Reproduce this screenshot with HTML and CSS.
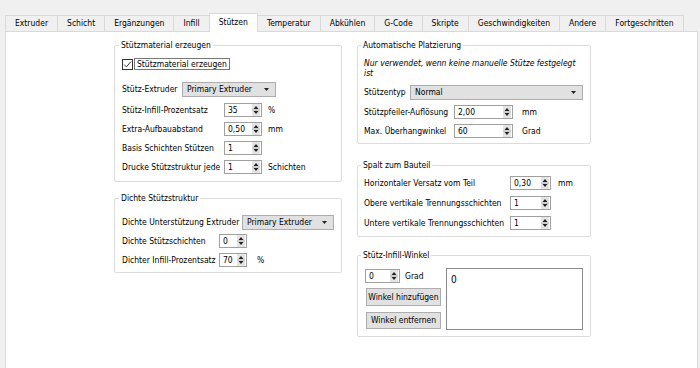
FILE: index.html
```html
<!DOCTYPE html>
<html lang="de">
<head>
<meta charset="utf-8">
<title>Stützen</title>
<link rel="stylesheet" href="styles.css">
</head>
<body>
<div class="window">
  <div class="tabs">
    <div class="tab">Extruder</div>
    <div class="tab">Schicht</div>
    <div class="tab">Ergänzungen</div>
    <div class="tab">Infill</div>
    <div class="tab active">Stützen</div>
    <div class="tab">Temperatur</div>
    <div class="tab">Abkühlen</div>
    <div class="tab">G-Code</div>
    <div class="tab">Skripte</div>
    <div class="tab">Geschwindigkeiten</div>
    <div class="tab">Andere</div>
    <div class="tab">Fortgeschritten</div>
  </div>
  <div class="pane">
    <div class="col col-left">
      <fieldset class="group g1">
        <legend>Stützmaterial erzeugen</legend>
        <div class="check-row">
          <span class="checkbox"><svg width="9" height="9" viewBox="0 0 9 9"><path d="M1.2 4.6 L3.4 6.9 L7.9 1.6" fill="none" stroke="#333" stroke-width="1"/></svg></span>
          <span class="focus">Stützmaterial erzeugen</span>
        </div>
        <div class="combo-row">
          <span class="clabel w60">Stütz-Extruder</span>
          <div class="combo w94"><span>Primary Extruder</span><svg class="drop" width="5" height="3" viewBox="0 0 5 3"><path d="M0 0 H5 L2.5 3 Z" fill="#222"/></svg></div>
        </div>
        <div class="form f1">
          <div class="frow"><span>Stütz-Infill-Prozentsatz</span><div class="spin"><span class="val">35</span><svg class="arr" width="8" height="12" viewBox="0 0 8 12"><rect width="8" height="12" fill="#e4e4e4"/><path d="M1.5 5 L4 2 L6.5 5 Z M1.5 7 L4 10 L6.5 7 Z" fill="#222"/><rect y="5.6" width="8" height="0.8" fill="#aaa"/></svg></div><span class="unit">%</span></div>
          <div class="frow"><span>Extra-Aufbauabstand</span><div class="spin"><span class="val">0,50</span><svg class="arr" width="8" height="12" viewBox="0 0 8 12"><rect width="8" height="12" fill="#e4e4e4"/><path d="M1.5 5 L4 2 L6.5 5 Z M1.5 7 L4 10 L6.5 7 Z" fill="#222"/><rect y="5.6" width="8" height="0.8" fill="#aaa"/></svg></div><span class="unit">mm</span></div>
          <div class="frow"><span>Basis Schichten Stützen</span><div class="spin"><span class="val">1</span><svg class="arr" width="8" height="12" viewBox="0 0 8 12"><rect width="8" height="12" fill="#e4e4e4"/><path d="M1.5 5 L4 2 L6.5 5 Z M1.5 7 L4 10 L6.5 7 Z" fill="#222"/><rect y="5.6" width="8" height="0.8" fill="#aaa"/></svg></div><span class="unit"></span></div>
          <div class="frow"><span>Drucke Stützstruktur jede</span><div class="spin"><span class="val">1</span><svg class="arr" width="8" height="12" viewBox="0 0 8 12"><rect width="8" height="12" fill="#e4e4e4"/><path d="M1.5 5 L4 2 L6.5 5 Z M1.5 7 L4 10 L6.5 7 Z" fill="#222"/><rect y="5.6" width="8" height="0.8" fill="#aaa"/></svg></div><span class="unit">Schichten</span></div>
        </div>
      </fieldset>

      <fieldset class="group g2">
        <legend>Dichte Stützstruktur</legend>
        <div class="combo-row">
          <span class="clabel w120">Dichte Unterstützung Extruder</span>
          <div class="combo w93"><span>Primary Extruder</span><svg class="drop" width="5" height="3" viewBox="0 0 5 3"><path d="M0 0 H5 L2.5 3 Z" fill="#222"/></svg></div>
        </div>
        <div class="form f2">
          <div class="frow"><span>Dichte Stützschichten</span><div class="spin"><span class="val">0</span><svg class="arr" width="8" height="12" viewBox="0 0 8 12"><rect width="8" height="12" fill="#e4e4e4"/><path d="M1.5 5 L4 2 L6.5 5 Z M1.5 7 L4 10 L6.5 7 Z" fill="#222"/><rect y="5.6" width="8" height="0.8" fill="#aaa"/></svg></div><span class="unit"></span></div>
          <div class="frow"><span>Dichter Infill-Prozentsatz</span><div class="spin"><span class="val">70</span><svg class="arr" width="8" height="12" viewBox="0 0 8 12"><rect width="8" height="12" fill="#e4e4e4"/><path d="M1.5 5 L4 2 L6.5 5 Z M1.5 7 L4 10 L6.5 7 Z" fill="#222"/><rect y="5.6" width="8" height="0.8" fill="#aaa"/></svg></div><span class="unit">%</span></div>
        </div>
      </fieldset>
    </div>

    <div class="col col-right">
      <fieldset class="group ga">
        <legend>Automatische Platzierung</legend>
        <p class="note">Nur verwendet, wenn keine manuelle Stütze festgelegt<br>ist</p>
        <div class="combo-row">
          <span class="clabel w46">Stützentyp</span>
          <div class="combo w173"><span>Normal</span><svg class="drop" width="5" height="3" viewBox="0 0 5 3"><path d="M0 0 H5 L2.5 3 Z" fill="#222"/></svg></div>
        </div>
        <div class="form fa">
          <div class="frow"><span>Stützpfeiler-Auflösung</span><div class="spin"><span class="val">2,00</span><svg class="arr" width="8" height="12" viewBox="0 0 8 12"><rect width="8" height="12" fill="#e4e4e4"/><path d="M1.5 5 L4 2 L6.5 5 Z M1.5 7 L4 10 L6.5 7 Z" fill="#222"/><rect y="5.6" width="8" height="0.8" fill="#aaa"/></svg></div><span class="unit">mm</span></div>
          <div class="frow"><span>Max. Überhangwinkel</span><div class="spin"><span class="val">60</span><svg class="arr" width="8" height="12" viewBox="0 0 8 12"><rect width="8" height="12" fill="#e4e4e4"/><path d="M1.5 5 L4 2 L6.5 5 Z M1.5 7 L4 10 L6.5 7 Z" fill="#222"/><rect y="5.6" width="8" height="0.8" fill="#aaa"/></svg></div><span class="unit">Grad</span></div>
        </div>
      </fieldset>

      <fieldset class="group gb">
        <legend>Spalt zum Bauteil</legend>
        <div class="form fb">
          <div class="frow"><span>Horizontaler Versatz vom Teil</span><div class="spin"><span class="val">0,30</span><svg class="arr" width="8" height="12" viewBox="0 0 8 12"><rect width="8" height="12" fill="#e4e4e4"/><path d="M1.5 5 L4 2 L6.5 5 Z M1.5 7 L4 10 L6.5 7 Z" fill="#222"/><rect y="5.6" width="8" height="0.8" fill="#aaa"/></svg></div><span class="unit">mm</span></div>
          <div class="frow"><span>Obere vertikale Trennungsschichten</span><div class="spin"><span class="val">1</span><svg class="arr" width="8" height="12" viewBox="0 0 8 12"><rect width="8" height="12" fill="#e4e4e4"/><path d="M1.5 5 L4 2 L6.5 5 Z M1.5 7 L4 10 L6.5 7 Z" fill="#222"/><rect y="5.6" width="8" height="0.8" fill="#aaa"/></svg></div><span class="unit"></span></div>
          <div class="frow"><span>Untere vertikale Trennungsschichten</span><div class="spin"><span class="val">1</span><svg class="arr" width="8" height="12" viewBox="0 0 8 12"><rect width="8" height="12" fill="#e4e4e4"/><path d="M1.5 5 L4 2 L6.5 5 Z M1.5 7 L4 10 L6.5 7 Z" fill="#222"/><rect y="5.6" width="8" height="0.8" fill="#aaa"/></svg></div><span class="unit"></span></div>
        </div>
      </fieldset>

      <fieldset class="group gc">
        <legend>Stütz-Infill-Winkel</legend>
        <div class="angles">
          <div class="angle-ctrl">
            <div class="angle-row"><div class="spin s35"><span class="val">0</span><svg class="arr" width="8" height="12" viewBox="0 0 8 12"><rect width="8" height="12" fill="#e4e4e4"/><path d="M1.5 5 L4 2 L6.5 5 Z M1.5 7 L4 10 L6.5 7 Z" fill="#222"/><rect y="5.6" width="8" height="0.8" fill="#aaa"/></svg></div><span class="unit">Grad</span></div>
            <div class="btn b-add">Winkel hinzufügen</div>
            <div class="btn b-rem">Winkel entfernen</div>
          </div>
          <div class="listbox">0</div>
        </div>
      </fieldset>
    </div>
  </div>
</div>
</body>
</html>
```

FILE: styles.css
```css
html, body {
  margin: 0;
  padding: 0;
  background: #f0f0f0;
  overflow: hidden;
}
body {
  font-family: "DejaVu Sans Condensed", "DejaVu Sans", "Liberation Sans", sans-serif;
  font-stretch: condensed;
  font-size: 8.5px;
  line-height: 11px;
  color: #000;
}
.window {
  width: 700px;
  height: 368px;
  padding-top: 13px;
  box-sizing: border-box;
}
.tabs {
  display: flex;
  align-items: flex-end;
  height: 18px;
  padding-left: 5px;
  position: relative;
  z-index: 2;
}
.tab {
  height: 16px;
  box-sizing: border-box;
  padding: 2px 9px 0;
  border: 1px solid #d9d9d9;
  border-bottom: none;
  background: #f0f0f0;
  margin-left: -1px;
  white-space: nowrap;
}
.tab:first-child { margin-left: 0; }
.tab.active {
  height: 19px;
  margin-bottom: -1px;
  background: #fff;
  padding-top: 3px;
}
.pane {
  margin-left: 5px;
  margin-right: 2px;
  height: 345px;
  box-sizing: border-box;
  background: #fff;
  border: 1px solid #d9d9d9;
  display: flex;
  align-items: flex-start;
  gap: 15px;
  padding: 8px 0 0 108px;
}
.col { display: flex; flex-direction: column; }
.col-left { width: 228px; }
.col-right { width: 234px; }

.group {
  margin: 0;
  padding: 0 7px;
  border: 1px solid #dcdcdc;
  border-radius: 2px;
  min-width: 0;
  box-sizing: border-box;
}
.col-right .group { padding-left: 6px; padding-right: 6px; }
.group legend {
  padding: 0 2px;
  margin-left: -3px;
  line-height: 11px;
}
.g1 { padding-bottom: 7px; }
.g2 { margin-top: 11px; padding-bottom: 5px; }
.ga { padding-bottom: 5px; }
.gb { margin-top: 16px; padding-bottom: 6px; }
.gc { margin-top: 13px; padding-bottom: 6px; }

.check-row {
  margin-top: 7px;
  height: 12px;
  display: flex;
  align-items: center;
}
.checkbox {
  width: 11px;
  height: 11px;
  box-sizing: border-box;
  border: 1px solid #333;
  background: #fff;
  display: flex;
  align-items: center;
  justify-content: center;
}
.focus {
  margin-left: 1px;
  height: 12px;
  box-sizing: border-box;
  border: 1px solid #777;
  padding: 0 2px;
  line-height: 10px;
  white-space: nowrap;
}

.combo-row {
  display: flex;
  align-items: center;
  height: 15px;
  white-space: nowrap;
}
.g1 .combo-row { margin-top: 12px; }
.g2 .combo-row { margin-top: 11px; }
.ga .combo-row { margin-top: 7px; }
.clabel { flex: none; }
.w60 { width: 60px; }
.w120 { width: 120px; }
.w46 { width: 46px; }
.combo {
  height: 15px;
  box-sizing: border-box;
  background: #e1e1e1;
  border: 1px solid #adadad;
  display: flex;
  align-items: center;
  justify-content: space-between;
  padding: 0 6px 0 4px;
}
.w94 { width: 94px; }
.w93 { width: 93px; }
.w173 { width: 173px; }

.form {
  display: flex;
  flex-direction: column;
  gap: 5px;
}
.f1 { margin-top: 6px; }
.f2 { margin-top: 4px; }
.fa { margin-top: 5px; }
.fb { margin-top: 5px; gap: 6px; }
.frow {
  display: grid;
  align-items: center;
  height: 14px;
  white-space: nowrap;
}
.f1 .frow { grid-template-columns: 102px 38px auto; }
.f1 .unit { margin-left: 6px; }
.f2 .frow { grid-template-columns: 97px 28px auto; }
.f2 .unit { margin-left: 10px; }
.fa .frow { grid-template-columns: 90px 59px auto; }
.fa .unit { margin-left: 9px; }
.fb .frow { grid-template-columns: 146px 41px auto; }
.fb .unit { margin-left: 7px; }

.spin {
  height: 14px;
  box-sizing: border-box;
  border: 1px solid #a0a0a0;
  background: #fff;
  display: flex;
  align-items: center;
  padding-right: 1px;
}
.spin .val {
  flex: 1;
  padding-left: 3px;
  line-height: 12px;
}
.arr { flex: none; display: block; }

.note {
  margin: 7px 0 0;
  font-style: italic;
  line-height: 10px;
  white-space: nowrap;
}

.angles {
  display: flex;
  margin-top: 7px;
}
.angle-ctrl {
  width: 77px;
  padding-left: 1px;
  display: flex;
  flex-direction: column;
}
.angle-row {
  display: flex;
  align-items: center;
  margin-top: 1px;
  height: 14px;
}
.s35 { width: 35px; }
.angle-row .unit { margin-left: 5px; }
.btn {
  margin-left: 1px;
  width: 75px;
  box-sizing: border-box;
  background: #e1e1e1;
  border: 1px solid #adadad;
  display: flex;
  align-items: center;
  justify-content: center;
  white-space: nowrap;
}
.b-add { margin-top: 5px; height: 18px; }
.b-rem { margin-top: 6px; height: 17px; }
.listbox {
  margin-left: 4px;
  width: 137px;
  height: 62px;
  box-sizing: border-box;
  border: 1px solid #8a8a8a;
  background: #fff;
  padding: 5px 4px;
  font-size: 10px;
  line-height: 11px;
}
```
